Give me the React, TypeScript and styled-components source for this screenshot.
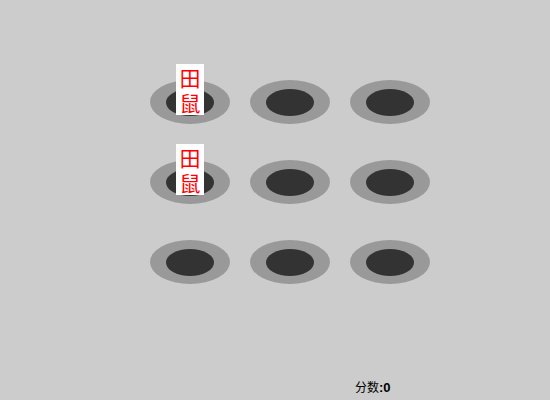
import React from 'react';
import styled, { createGlobalStyle } from 'styled-components';

const GlobalStyle = createGlobalStyle`
  html, body {
    margin: 0;
    padding: 0;
    background: #cccccc;
    font-family: "Liberation Sans", "Noto Sans CJK SC", sans-serif;
  }
`;

const Page = styled.div`
  width: 550px;
  height: 400px;
  display: flex;
  flex-direction: column;
  overflow: hidden;
`;

const Board = styled.div`
  display: grid;
  grid-template-columns: repeat(3, 80px);
  grid-auto-rows: 44px;
  column-gap: 20px;
  row-gap: 36px;
  margin: 80px 0 0 150px;
`;

const Hole = styled.div`
  position: relative;
  width: 80px;
  height: 44px;
  border-radius: 50%;
  background: #999999;
  display: flex;
  align-items: center;
  justify-content: center;
`;

const Pit = styled.div`
  width: 48px;
  height: 27px;
  border-radius: 50%;
  background: #333333;
`;

const Mouse = styled.div`
  position: absolute;
  left: 26px;
  top: -16px;
  width: 28px;
  height: 51px;
  padding-top: 1px;
  box-sizing: border-box;
  background: #ffffff;
  color: #ff0000;
  font-family: "Noto Sans CJK SC", sans-serif;
  font-size: 21px;
  line-height: 25px;
  text-align: center;
  word-break: break-all;
`;

const Footer = styled.div`
  margin-top: auto;
  padding: 0 0 5px 355px;
  font-size: 12px;
  line-height: 14px;
  color: #000000;
  font-family: "Noto Sans CJK SC", sans-serif;
  b {
    font-family: "Liberation Sans", sans-serif;
    font-size: 13px;
  }
`;

const holes = [true, false, false, true, false, false, false, false, false];

const App = () => {
  return (
    <Page>
      <GlobalStyle />
      <Board>
        {holes.map((hasMouse, i) => (
          <Hole key={i}>
            <Pit />
            {hasMouse && <Mouse>田鼠</Mouse>}
          </Hole>
        ))}
      </Board>
      <Footer>
        分数<b>:0</b>
      </Footer>
    </Page>
  );
};

export default App;
